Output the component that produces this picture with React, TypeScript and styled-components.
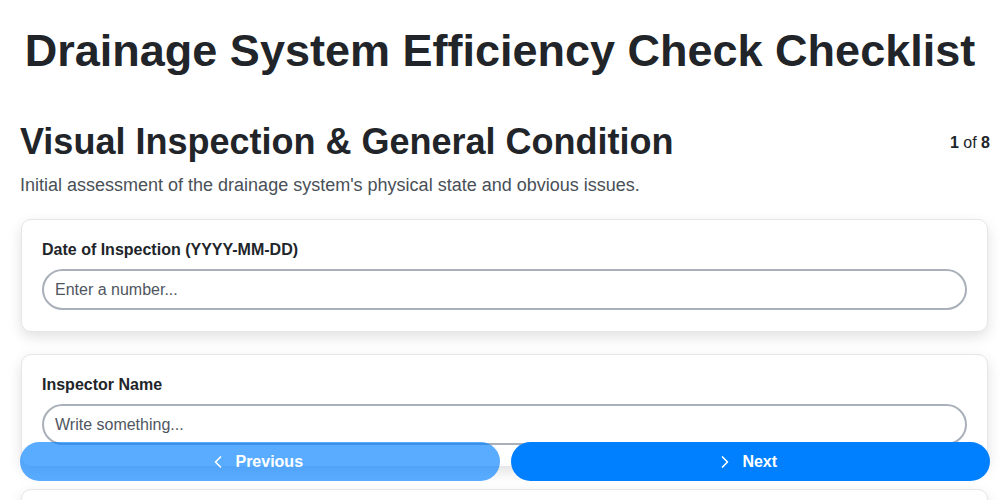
import styled, { createGlobalStyle } from 'styled-components';
import { ChevronLeft, ChevronRight } from 'lucide-react';

const GlobalStyle = createGlobalStyle`
  * { box-sizing: border-box; }
  body {
    margin: 0;
    background: #fff;
    font-family: "Liberation Sans", Arial, sans-serif;
    color: #212529;
  }
`;

const Page = styled.div`
  padding: 0 10px;
`;

const Title = styled.h1`
  margin: 24px 0 0;
  font-size: 45px;
  line-height: 1.2;
  font-weight: 700;
  text-align: center;
  white-space: nowrap;
  color: #212529;
`;

const Section = styled.section`
  padding-left: 10px;
`;

const SectionHead = styled.div`
  display: flex;
  justify-content: space-between;
  align-items: flex-start;
  margin-top: 42px;
`;

const SectionTitle = styled.h2`
  margin: 0;
  font-size: 36px;
  line-height: 1.2;
  font-weight: 700;
  color: #212529;
`;

const Counter = styled.div`
  font-size: 16px;
  line-height: 1.2;
  color: #212529;
  margin-top: 13px;
  b { font-weight: 700; }
`;

const Description = styled.p`
  margin: 9px 0 0;
  font-size: 18px;
  line-height: 1.5;
  color: #495057;
`;

const Fields = styled.div`
  display: flex;
  flex-direction: column;
  gap: 22px;
  margin-top: 20px;
  padding: 0 2px 120px 1px;
`;

const Card = styled.div`
  background: #fff;
  border: 1px solid #e6e6ea;
  border-radius: 10px;
  padding: 20px 20px 21px;
  box-shadow: 0 5px 14px rgba(0, 0, 0, 0.12);
`;

const Label = styled.label`
  display: block;
  font-size: 16px;
  line-height: 20px;
  font-weight: 700;
  color: #212529;
  margin-bottom: 9px;
`;

const Input = styled.input`
  display: block;
  width: 100%;
  height: 41px;
  padding: 0 11px;
  border: 2px solid #a9b0b9;
  border-radius: 999px;
  font-family: inherit;
  font-size: 16px;
  color: #212529;
  background: #fff;
  outline: none;
  &::placeholder { color: #4f5661; }
`;

const Footer = styled.div`
  position: fixed;
  left: 20px;
  right: 10px;
  bottom: 19px;
  display: grid;
  grid-template-columns: 1fr 1fr;
  gap: 11px;
`;

const NavButton = styled.button<{ $muted?: boolean }>`
  height: 39px;
  border: none;
  border-radius: 20px;
  background: #0080ff;
  opacity: ${(p) => (p.$muted ? 0.65 : 1)};
  color: #fff;
  font-family: inherit;
  font-size: 16px;
  font-weight: 700;
  display: flex;
  align-items: center;
  justify-content: center;
  gap: 7px;
  padding: 0 8px 0 0;
  cursor: pointer;
`;

const fields = [
  { label: 'Date of Inspection (YYYY-MM-DD)', placeholder: 'Enter a number...' },
  { label: 'Inspector Name', placeholder: 'Write something...' },
  { label: 'Weather Conditions', placeholder: 'Write something...' },
];

export default function App() {
  return (
    <>
      <GlobalStyle />
      <Page>
        <Title>Drainage System Efficiency Check Checklist</Title>
        <Section>
          <SectionHead>
            <SectionTitle>Visual Inspection &amp; General Condition</SectionTitle>
            <Counter>
              <b>1</b> of <b>8</b>
            </Counter>
          </SectionHead>
          <Description>
            Initial assessment of the drainage system's physical state and obvious issues.
          </Description>
          <Fields>
            {fields.map((f) => (
              <Card key={f.label}>
                <Label>{f.label}</Label>
                <Input placeholder={f.placeholder} />
              </Card>
            ))}
          </Fields>
        </Section>
      </Page>
      <Footer>
        <NavButton $muted>
          <ChevronLeft size={20} strokeWidth={2} />
          Previous
        </NavButton>
        <NavButton>
          <ChevronRight size={20} strokeWidth={2} />
          Next
        </NavButton>
      </Footer>
    </>
  );
}
